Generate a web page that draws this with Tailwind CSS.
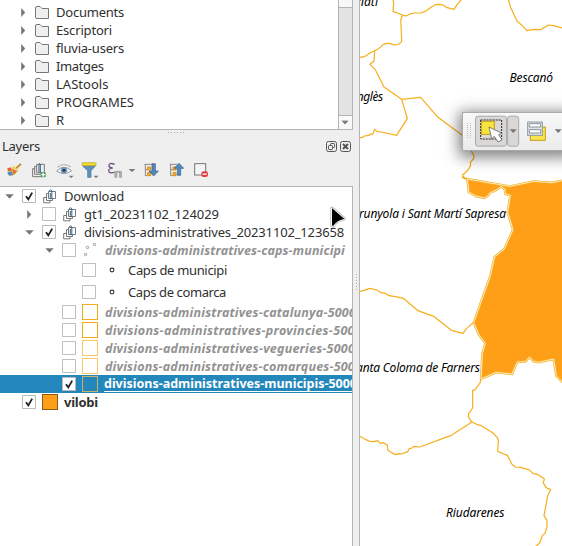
<!DOCTYPE html>
<html lang="ca">
<head>
<meta charset="utf-8">
<title>Layers</title>
<script src="https://cdn.jsdelivr.net/npm/@tailwindcss/browser@4"></script>
</head>
<body class="w-[562px] h-[546px] overflow-hidden relative flex bg-[#efefef] text-[#303030] text-[13px] leading-[18px] font-['Noto_Sans',sans-serif]">

<!-- icon symbols -->
<svg class="hidden">
  <symbol id="folder" viewBox="0 0 14 13"><path d="M.5 11V2Q.5.5 2 .5H5L7 2.5H13.500V12.500H2Q.5 12.500 .5 11Z" fill="#eeefee" stroke="#777"/></symbol>
  <symbol id="right" viewBox="0 0 5 9"><path d="M.2 0L4.200 4.500L.2 9Z" fill="#777"/></symbol>
  <symbol id="down" viewBox="0 0 9 5"><path d="M.3.3H8.700L4.500 4.700Z" fill="#777"/></symbol>
  <symbol id="check" viewBox="0 0 14 14"><path d="M.5.5H13.500V13.500H.5Z" fill="#fff" stroke="#bbb"/><path d="M4 7.300L6.300 10.400L10.200 3.600" fill="none" stroke="#222" stroke-width="1.800"/></symbol>
  <symbol id="box" viewBox="0 0 14 14"><path d="M.5.5H13.500V13.500H.5Z" fill="#fff" stroke="#bfbfbf"/></symbol>
  <symbol id="group" viewBox="0 0 14 15"><path d="M3 8.500H.7V13.800H7V12M5 4.500H3.500V11.500H9.500V9.500M5.500 9.500V2.500H12.500V9.500Z" fill="none" stroke="#777"/><path d="M7.300 4V8.500Q7.500 10.500 8.800 9.500V2.500Q8.700 .8 7.500 .9Q6.300 1 6.300 2.500" fill="none" stroke="#325f83" stroke-width="1"/></symbol>
</svg>

<div class="w-[360px] h-full flex flex-col shrink-0 border-r border-[#b4b4b4]">
  <!-- file browser -->
  <div class="w-[353px] h-[130px] flex bg-white border-r border-b border-[#b4b4b4] overflow-hidden">
    <div class="flex-1 pt-[3px] pl-[21px] [&>div]:h-[18px] [&>div]:flex [&>div]:items-center [&_span]:whitespace-nowrap">
      <div><svg class="w-[5px] h-[9px]"><use href="#right"/></svg><svg class="w-[14px] h-[13px] ml-[9px] mr-[7px]"><use href="#folder"/></svg><span data-w="68">Documents</span></div>
      <div><svg class="w-[5px] h-[9px]"><use href="#right"/></svg><svg class="w-[14px] h-[13px] ml-[9px] mr-[7px]"><use href="#folder"/></svg><span data-w="56">Escriptori</span></div>
      <div><svg class="w-[5px] h-[9px]"><use href="#right"/></svg><svg class="w-[14px] h-[13px] ml-[9px] mr-[7px]"><use href="#folder"/></svg><span data-w="68">fluvia-users</span></div>
      <div><svg class="w-[5px] h-[9px]"><use href="#right"/></svg><svg class="w-[14px] h-[13px] ml-[9px] mr-[7px]"><use href="#folder"/></svg><span data-w="47.500">Imatges</span></div>
      <div><svg class="w-[5px] h-[9px]"><use href="#right"/></svg><svg class="w-[14px] h-[13px] ml-[9px] mr-[7px]"><use href="#folder"/></svg><span data-w="52.500">LAStools</span></div>
      <div><svg class="w-[5px] h-[9px]"><use href="#right"/></svg><svg class="w-[14px] h-[13px] ml-[9px] mr-[7px]"><use href="#folder"/></svg><span data-w="78">PROGRAMES</span></div>
      <div><svg class="w-[5px] h-[9px]"><use href="#right"/></svg><svg class="w-[14px] h-[13px] ml-[9px] mr-[7px]"><use href="#folder"/></svg><span data-w="8.500">R</span></div>
    </div>
    <div class="w-[14px] border-l border-[#b4b4b4] flex flex-col bg-[#e3e3e3]">
      <div class="h-[8px] bg-[#f8f8f8] border-b border-[#b4b4b4]"></div>
      <div class="flex-1"></div>
      <div class="h-[14px] bg-[#fafafa] border-t border-[#b4b4b4] flex items-center justify-center"><svg class="w-[8px] h-[5px] -translate-x-[1px]" viewBox="0 0 9 5"><use href="#down"/></svg></div>
    </div>
  </div>

  <!-- dock title -->
  <div class="h-[5px] flex justify-center"><div class="w-[17px] h-[1px] mt-[2px] bg-[repeating-linear-gradient(90deg,#aaa_0_1px,transparent_1px_3px)] -translate-x-[3px]"></div></div>
  <div class="h-[22px] flex items-center pl-[2px] pr-[8px]">
    <span data-w="38">Layers</span>
    <svg class="w-[11px] h-[11px] ml-auto mr-[3px]" viewBox="0 0 11 11" fill="none" stroke="#555"><rect x=".5" y=".5" width="10" height="10" rx="2"/><rect x="4.500" y="2.500" width="4" height="4" rx=".7"/><rect x="2.500" y="4.500" width="4" height="4" rx=".7" fill="#efefef"/></svg>
    <svg class="w-[11px] h-[11px]" viewBox="0 0 11 11" fill="none" stroke="#555"><rect x=".5" y=".5" width="10" height="10" rx="2"/><path d="M3 3L8 8M8 3L3 8" stroke-width="2"/></svg>
  </div>

  <!-- layer toolbar -->
  <div class="h-[29px] shrink-0">
    <svg class="w-[220px] h-[29px]" viewBox="0 81 660 87">
      <g><path d="M22 118L36 112L48 124L38 138L24 134Z" fill="#f3c84b"/><path d="M22 115L31 112L36 121L25 124Z" fill="#e35d44"/><path d="M22 127L35 124L39 135L27 137Z" fill="#4c8fc7"/><path d="M36 116L52 124L41 136Z" fill="#e8703f"/><path d="M38 109L54 122" stroke="#f2cf62" stroke-width="6"/><path d="M49 114L63 102" stroke="#c98925" stroke-width="5"/></g>
      <g fill="none" stroke="#777" stroke-width="3"><path d="M105 116H98V140H124M110 109H104V133H127M110 103H133V128H110Z"/><path d="M117 126V103Q118 98 121 103V129" stroke="#325f83"/></g>
      <rect x="122" y="126" width="15" height="16" rx="3" fill="#4b9a58"/><path d="M129.500 128V140M124 134H135" stroke="#fff" stroke-width="4"/>
      <path d="M170 123Q190 101 215 122Q193 139 170 123Z" fill="#fafafa" stroke="#999" stroke-width="3"/><path d="M172 112Q190 96 213 111" fill="none" stroke="#aaa" stroke-width="3"/><circle cx="192" cy="121" r="10" fill="#6f9dc9"/><circle cx="192" cy="121" r="4.500" fill="#26323b"/><path d="M206 137H221L213.500 144Z" fill="#777"/>
      <path d="M247 107H287L273 122V142H263V122Z" fill="#6092bd" stroke="#416f98" stroke-width="2"/><rect x="246" y="98" width="42" height="9" rx="3" fill="#f4dc2e" stroke="#b99e20" stroke-width="2"/><path d="M280 137H296L288 144Z" fill="#777"/>
      <path d="M344 103Q326 96 327 108Q328 113 338 114Q325 115 326 123Q329 132 345 126" fill="none" stroke="#735583" stroke-width="4"/><path d="M343 143V127Q343 122 349 122H361Q366 122 366 128V143H357V129H352V143Z" fill="#aaa"/><path d="M386 117H406L396 126Z" fill="#777"/>
      <g fill="none" stroke="#888" stroke-width="3"><path d="M433 103H456M436 103V137H442M436 119H442M509 103H532M512 103V137H518M512 119H518"/></g>
      <g fill="#f6b23d" stroke="#e28a12" stroke-width="3"><path d="M443 111H452V120H443ZM443 128H452V137H443ZM519 111H528V120H519ZM519 128H528V137H519Z"/></g>
      <path d="M456 101H466V123H475L461 138L447 123H456Z" fill="#5288bb" stroke="#2d5f8d" stroke-width="2"/>
      <path d="M532 136H542V115H551L537 100L523 115H532Z" fill="#5288bb" stroke="#2d5f8d" stroke-width="2"/>
      <rect x="584" y="101" width="33" height="34" fill="#f5f5f5" stroke="#777" stroke-width="3"/><rect x="604" y="124" width="20" height="17" rx="7" fill="#e03a45"/><path d="M608 132.500H620" stroke="#fff" stroke-width="4"/>
    </svg>
  </div>

  <!-- layer tree -->
  <div class="w-[353px] flex-1 min-h-0 bg-white border-t border-r border-[#b4b4b4] overflow-hidden [&>div]:h-[18px] [&>div]:flex [&>div]:items-center [&_svg]:shrink-0 [&_span]:whitespace-nowrap [&_span]:shrink-0">
    <div class="pl-[5px]"><svg class="w-[9px] h-[5px]"><use href="#down"/></svg><svg class="w-[14px] h-[14px] ml-[8px]"><use href="#check"/></svg><svg class="w-[14px] h-[15px] ml-[7px] mr-[7px]"><use href="#group"/></svg><span data-w="60">Download</span></div>
    <div class="pl-[27px]"><svg class="w-[5px] h-[9px]"><use href="#right"/></svg><svg class="w-[14px] h-[14px] ml-[10px]"><use href="#box"/></svg><svg class="w-[14px] h-[15px] ml-[7px] mr-[7px]"><use href="#group"/></svg><span data-w="135">gt1_20231102_124029</span></div>
    <div class="pl-[25px]"><svg class="w-[9px] h-[5px]"><use href="#down"/></svg><svg class="w-[14px] h-[14px] ml-[8px]"><use href="#check"/></svg><svg class="w-[14px] h-[15px] ml-[7px] mr-[7px]"><use href="#group"/></svg><span data-w="260">divisions-administratives_20231102_123658</span></div>
    <div class="pl-[45px]"><svg class="w-[9px] h-[5px]"><use href="#down"/></svg><svg class="w-[14px] h-[14px] ml-[8px]"><use href="#box"/></svg><svg class="w-[14px] h-[14px] ml-[7px] mr-[8px]" viewBox="0 0 14 14" fill="none" stroke="#888" stroke-width=".8"><circle cx="2.500" cy="11.500" r="1.200"/><circle cx="4.500" cy="4.500" r="1.200"/><circle cx="11.500" cy="1.500" r="1.200"/></svg><span data-w="240" class="leading-[19px] pt-px font-bold italic text-[12.5px] text-[#929292]">divisions-administratives-caps-municipi</span></div>
    <div class="!h-[22px] pl-[82px]"><svg class="w-[14px] h-[14px]"><use href="#box"/></svg><svg class="w-[6px] h-[6px] ml-[13px] mr-[13px]" viewBox="0 0 6 6"><circle cx="3" cy="3" r="1.900" fill="#fff" stroke="#333" stroke-width="1.100"/></svg><span data-w="99">Caps de municipi</span></div>
    <div class="!h-[22px] pl-[82px]"><svg class="w-[14px] h-[14px]"><use href="#box"/></svg><svg class="w-[6px] h-[6px] ml-[13px] mr-[13px]" viewBox="0 0 6 6"><circle cx="3" cy="3" r="1.900" fill="#fff" stroke="#333" stroke-width="1.100"/></svg><span data-w="98">Caps de comarca</span></div>
    <div class="pl-[62px]"><svg class="w-[14px] h-[14px]"><use href="#box"/></svg><i class="w-[16px] h-[16px] ml-[6px] mr-[7px] shrink-0 border border-[#f3ab18]"></i><span data-w="251" class="leading-[19px] pt-px font-bold italic text-[12.5px] text-[#929292]">divisions-administratives-catalunya-5000</span></div>
    <div class="pl-[62px]"><svg class="w-[14px] h-[14px]"><use href="#box"/></svg><i class="w-[16px] h-[16px] ml-[6px] mr-[7px] shrink-0 border border-[#f3ab18]"></i><span data-w="257" class="leading-[19px] pt-px font-bold italic text-[12.5px] text-[#929292]">divisions-administratives-provincies-5000</span></div>
    <div class="pl-[62px]"><svg class="w-[14px] h-[14px]"><use href="#box"/></svg><i class="w-[16px] h-[16px] ml-[6px] mr-[7px] shrink-0 border border-[#f8c968]"></i><span data-w="250" class="leading-[19px] pt-px font-bold italic text-[12.5px] text-[#929292]">divisions-administratives-vegueries-5000</span></div>
    <div class="pl-[62px]"><svg class="w-[14px] h-[14px]"><use href="#box"/></svg><i class="w-[16px] h-[16px] ml-[6px] mr-[7px] shrink-0 border border-[#f8c968]"></i><span data-w="257" class="leading-[19px] pt-px font-bold italic text-[12.5px] text-[#929292]">divisions-administratives-comarques-5000</span></div>
    <div class="pl-[62px] bg-[#2487bc]"><svg class="w-[14px] h-[14px]"><use href="#check"/></svg><i class="w-[16px] h-[16px] ml-[6px] mr-[6px] shrink-0 border border-[#c9b26a]"></i><span data-w="253" class="self-start h-[17px] leading-[18px] border-b border-white font-bold text-[12.5px] text-white">divisions-administratives-municipis-5000</span></div>
    <div class="pl-[22px]"><svg class="w-[14px] h-[14px]"><use href="#check"/></svg><i class="w-[16px] h-[16px] ml-[6px] mr-[6px] shrink-0 border border-[#8a5a18] bg-[#ff9e17]"></i><span data-w="34" class="font-bold">vilobi</span></div>
  </div>
</div>

<!-- map canvas -->
<svg class="w-[202px] h-[546px] shrink-0 bg-white" viewBox="360 0 202 546">
  <g fill="none" stroke="#f6ae1b" stroke-width="3.600" stroke-linejoin="round">
    <g transform="translate(352 0) scale(.33333)">
      <path d="M123 -3L125 10L123 34L151 45L162 48L176 41L188 39L208 39L220 34L235 23L250 14L263 13L273 15L285 23L306 28L315 14L327 0"/>
      <path d="M159 46L150 48L146 60L147 75L149 119Q151 126 142 131Q133 137 123 134L115 131Q105 128 94 133L80 146L68 152L54 159L41 168Q33 173 20 171"/>
      <path d="M68 152L66 183L54 193L70 209L96 261L149 298L206 292L258 352L330 405"/>
      <path d="M149 298L166 355L134 406L88 396L75 394L68 388L63 401L46 407L37 408L30 413H20"/>
      <path d="M469 -3L475 20L495 63L510 76L525 92L548 88L566 89L589 75L605 77L635 85"/>
      <path d="M330 405Q350 430 359 455L366 468L364 477L355 487L356 496L348 510L332 525L332 533L348 540"/>
    </g>
    <g transform="translate(352 290) scale(.33333)">
      <path d="M20 5L33 2L54 -5L75 0L87 8L100 10L111 17L130 20L154 25L198 62L245 79L298 121L333 130L343 116L364 98"/>
      <path d="M387 266L384 279L369 299L362 301V354L350 371L349 380L360 397"/>
    </g>
    <g transform="translate(352 410) scale(.33333)">
      <path d="M360 36L298 76L203 111L185 109L180 114L172 116L167 125L149 132L140 131L131 134L122 130L107 120L106 106L94 98L85 100L77 92L67 95L53 94L40 88L22 78"/>
      <path d="M360 36L374 43L388 47L423 69L436 83L439 91L437 124L448 129L466 136L480 163L490 171L506 172L530 179L543 190L558 194L577 206L574 219L582 233L596 239L587 257L581 290L576 317L585 331V350L579 370L571 377L563 399L550 410"/>
    </g>
  </g>
  <g transform="translate(352 170) scale(.33333)" stroke-linejoin="round">
    <path d="M345 27L349 49L350 66L371 78L397 84L411 75L413 69L435 59L447 49L458 57L460 72L475 76L467 127L483 179L457 237L428 261L414 321L365 458L380 493L400 520L391 551L387 627L432 607L480 612L496 576L520 575L533 561L544 574L560 577L605 567L613 618L640 645V30L600 38L545 34L474 49Z" fill="#ff9e17" stroke="#f3b12d" stroke-width="7"/>
    <path d="M640 645L613 618L605 567L560 577L544 574L533 561L520 575L496 576L480 612L432 607L387 627L391 551L400 520L380 493L365 458L414 321L428 261L457 237L483 179L467 127L475 76L460 72L458 57L447 49L435 59L413 69L411 75L397 84L371 78L350 66L349 49L345 27L474 49L545 34L600 38L640 30" fill="none" stroke="#fff4cf" stroke-width="2.600"/>
    <path d="M332 20L345 27" stroke="#f6ae1b" stroke-width="4" fill="none"/>
  </g>
  <g class="text-[12px] italic" fill="#000" text-anchor="end">
    <text x="378" y="6" textLength="21">nati</text>
    <text x="553" y="81.500" textLength="43.500">Bescanó</text>
    <text x="383.300" y="101" textLength="26.500">nglès</text>
    <text x="506" y="217.500" textLength="147">runyola i Sant Martí Sapresa</text>
    <text x="480" y="372" textLength="124">anta Coloma de Farners</text>
    <text x="504.500" y="517" textLength="58.500">Riudarenes</text>
  </g>
</svg>

<!-- splitter grips over the panel edges -->
<div class="absolute left-[352px] top-[130px] w-[1px] h-[56px] bg-[#efefef]"></div>
<div class="absolute left-[356px] top-[274px] w-[1px] h-[17px] bg-[repeating-linear-gradient(#aaa_0_1px,transparent_1px_3px)]"></div>

<!-- floating selection toolbar -->
<div class="absolute left-[462px] top-[112px] w-[110px] h-[39px] border border-[#aaa] bg-[linear-gradient(#f8f8f8,#ebebeb)] shadow-[0_3px_14px_3px_rgba(0,0,0,0.5)]">
  <svg class="w-[107px] h-[37px]" viewBox="333 340 321 111">
    <g stroke="#bbb" stroke-width="3" stroke-dasharray="3 3"><path d="M346.500 370V418M355.500 370V418"/></g>
    <rect x="370.500" y="349.500" width="93" height="90" rx="7" fill="#d9d8d6" stroke="#aaa" stroke-width="3"/>
    <rect x="467" y="349.500" width="33" height="90" rx="7" fill="#d9d8d6" stroke="#aaa" stroke-width="3"/>
    <rect x="386" y="361" width="63" height="57" fill="none" stroke="#222" stroke-width="3" stroke-dasharray="6 3"/>
    <rect x="388" y="365" width="39" height="39" fill="#f4e43d" stroke="#c79b16" stroke-width="3"/>
    <path d="M411 382L419 417L427 410L438 427L450 421L440 405L450 401Z" fill="#fff" stroke="#666" stroke-width="2.500"/>
    <path d="M473 389H494L483.500 400ZM608 389H629L618.500 400Z" fill="#777"/>
    <rect x="535" y="382" width="45" height="40" fill="#f6e64b" stroke="#c99e19" stroke-width="3"/>
    <rect x="527" y="367" width="44" height="40" fill="#e2e6e9" stroke="#8b989f" stroke-width="3"/>
    <path d="M532 372H566V382H532ZM532 390H566V400H532Z" fill="#fff" stroke="#87949c" stroke-width="3"/>
  </svg>
</div>

<!-- pointer -->
<svg class="absolute left-[328px] top-[204px] w-[20px] h-[26px]" viewBox="0 0 20 26"><path d="M3.500 4Q4 3.500 5 4.500L16.500 14.500Q16 16 14 16Q9 17 5 22.500Q3.500 22.500 3.500 21Z" fill="#000" stroke="#bbb" stroke-width="2.400"/><path d="M3.500 4Q4 3.500 5 4.500L16.500 14.500Q16 16 14 16Q9 17 5 22.500Q3.500 22.500 3.500 21Z" fill="#000" stroke="#fff" stroke-width="1"/></svg>

<script>
// Spread each label's letters so that it takes its column width.
function fit() {
  document.querySelectorAll('[data-w]').forEach(function (e) {
    e.style.letterSpacing = '0px';
    var w = e.getBoundingClientRect().width;
    e.style.letterSpacing = ((parseFloat(e.dataset.w) - w) / e.textContent.length) + 'px';
  });
}
window.addEventListener('load', fit);
document.fonts.ready.then(fit);
new ResizeObserver(fit).observe(document.body);
</script>
</body>
</html>
